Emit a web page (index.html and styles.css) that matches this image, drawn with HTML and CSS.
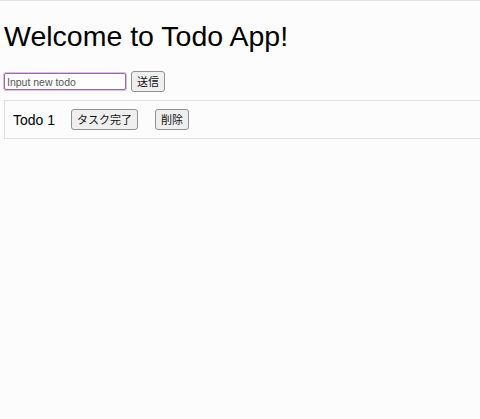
FILE: index.html
```html
<!DOCTYPE html>
<html lang="ja">
<head>
  <meta charset="UTF-8">
  <meta name="viewport" content="width=device-width, initial-scale=1.0">
  <title>Todo App</title>
  <link rel="stylesheet" href="styles.css">
</head>
<body>
  <h1>Welcome to Todo App!</h1>
  <div class="form">
    <input type="text" class="todo-input" placeholder="Input new todo">
    <button class="btn">送信</button>
  </div>
  <ul class="todo-list">
    <li class="todo-item">
      <span class="todo-title">Todo 1</span>
      <button class="btn">タスク完了</button>
      <button class="btn">削除</button>
    </li>
  </ul>
</body>
</html>
```

FILE: styles.css
```css
html {
  overflow-x: hidden;
}
body {
  margin: 0;
  padding: 0 0 0 4px;
  border-top: 1px solid #e2e2e2;
  background-color: #fcfcfc;
  font-family: "Liberation Sans", "Noto Sans CJK JP", sans-serif;
  color: #000;
}
h1 {
  font-size: 28.5px;
  font-weight: normal;
  margin: 19px 0 19px 0;
  line-height: 32px;
}
.form {
  display: flex;
  align-items: center;
}
.todo-input {
  box-sizing: border-box;
  width: 122px;
  height: 17px;
  margin: 0 5px 0 0;
  padding: 0 2px;
  border: 1px solid #9c6aa8;
  border-radius: 2px;
  box-shadow: 0 0 0 1px rgba(170, 120, 180, 0.45);
  background: #fff;
  font-family: "Liberation Sans", sans-serif;
  font-size: 10.5px;
  outline: none;
}
.todo-input::placeholder {
  color: #555;
}
.btn {
  box-sizing: border-box;
  height: 21px;
  padding: 0 5px;
  border: 1px solid #929292;
  border-radius: 3px;
  background-color: #efefef;
  color: #111;
  font-family: "Noto Sans CJK JP", sans-serif;
  font-size: 11px;
  line-height: 19px;
}
.todo-list {
  list-style: none;
  margin: 8px 0 0;
  padding: 0;
}
.todo-item {
  display: flex;
  align-items: center;
  padding: 8px;
  border: 1px solid #e2e2e2;
  border-right: none;
}
.todo-title {
  font-size: 14px;
  margin-right: 16px;
}
.todo-item .btn + .btn {
  margin-left: 17px;
}
```
